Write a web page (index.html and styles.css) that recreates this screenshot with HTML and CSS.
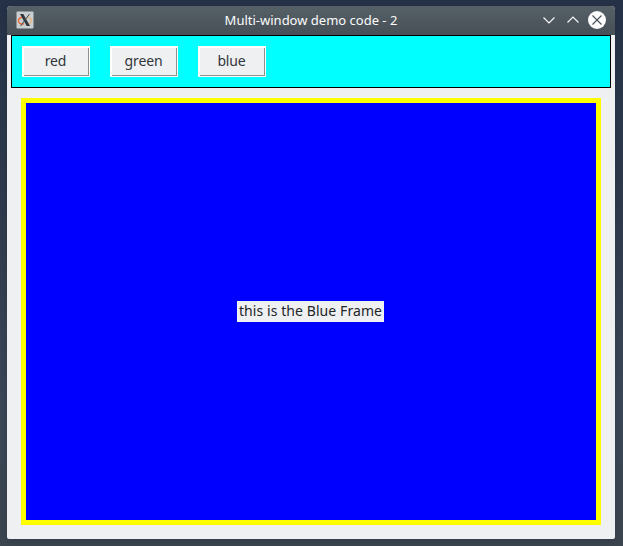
FILE: index.html
```html
<!DOCTYPE html>
<html lang="en">
<head>
<meta charset="utf-8">
<title>Multi-window demo code - 2</title>
<link rel="stylesheet" href="styles.css">
</head>
<body>
<div class="window">
  <header class="titlebar">
    <svg class="app-icon" viewBox="0 0 18 18" width="18" height="18">
      <rect x=".5" y=".5" width="17" height="17" rx="1" fill="#c9cfd0"/>
      <path d="M7.500 6C4 6.500 2.300 8 2.500 10C2.800 12.500 5 13.500 8 12.800" fill="none" stroke="#e8703c" stroke-width="1.400"/>
      <path d="M11 6C14 6.300 15.500 7.500 15.300 10C15 12 13 13.200 10.500 13" fill="none" stroke="#e6b889" stroke-width="1.400"/>
      <path d="M4 3h3.300l6.700 12h-3.300z" fill="#30373b"/>
      <path d="M13.500 3L4.500 15" stroke="#41494c" stroke-width="1"/>
    </svg>
    <h1 class="title">Multi-window demo code - 2</h1>
    <div class="controls">
      <svg viewBox="0 0 18 18" width="18" height="18"><path d="M3.500 6.500L9 12L14.500 6.500"/></svg>
      <svg viewBox="0 0 18 18" width="18" height="18"><path d="M3.500 11.500L9 6L14.500 11.500"/></svg>
      <svg class="close" viewBox="0 0 18 18" width="18" height="18"><circle cx="9" cy="9" r="9"/><path d="M4.500 4.500L13.500 13.500M13.500 4.500L4.500 13.500"/></svg>
    </div>
  </header>
  <nav class="toolbar">
    <button class="btn">red</button>
    <button class="btn">green</button>
    <button class="btn">blue</button>
  </nav>
  <main class="frame"><span class="label">this is the Blue Frame</span></main>
</div>
</body>
</html>
```
FILE: styles.css
```css
* { box-sizing: border-box; }
html, body { height: 100%; }
body {
  margin: 0;
  padding: 6px 8px 7px 7px;
  overflow: hidden;
  background: linear-gradient(#263248, #303c4e 40%, #3c4858 75%, #3c4650);
  font-family: "Noto Sans", sans-serif;
}
.window {
  display: flex;
  flex-direction: column;
  height: 533px;
  border-radius: 4px 4px 2px 2px;
  background: #eff0f1;
  box-shadow: 0 2px 8px rgba(20, 25, 32, .25);
}
.titlebar {
  display: grid;
  grid-template-columns: 74px 1fr 74px;
  align-items: center;
  height: 29px;
  padding: 0 9px 1px;
  border-radius: 4px 4px 0 0;
  background: linear-gradient(#566067, #475057);
}
.app-icon { display: block; }
.title {
  margin: 0;
  font-size: 13px;
  font-weight: 400;
  line-height: 18px;
  text-align: center;
  color: #fcfcfc;
}
.controls {
  display: flex;
  justify-content: flex-end;
  gap: 6px;
}
.controls svg { display: block; flex: none; fill: none; stroke: #fcfcfc; stroke-width: 1.1; }
.controls .close circle { fill: #fcfcfc; stroke: none; }
.controls .close path { stroke: #475057; }
.toolbar {
  display: flex;
  gap: 20px;
  height: 53px;
  margin: 0 4px;
  padding: 10px;
  border: 1px solid #000;
  background: #0ff;
}
.btn {
  width: 68px;
  height: 31px;
  padding: 0 1px 2px 0;
  border: 1px solid #fbfbfc;
  background: #eff0f1;
  box-shadow: inset 1px 1px #fff, inset -1px -1px #8f9090;
  font: 14px/20px "Noto Sans", sans-serif;
  letter-spacing: -.15px;
  color: #31363b;
}
.frame {
  display: flex;
  align-items: center;
  justify-content: center;
  height: 427px;
  margin: 10px 14px 14px;
  padding-right: 1px;
  border: 5px solid #ff0;
  background: #00f;
}
.label {
  width: 147px;
  height: 21px;
  background: #eff0f1;
  font: 14px/20px "Noto Sans", sans-serif;
  letter-spacing: .08px;
  text-align: center;
  color: #232629;
  white-space: nowrap;
}
```
